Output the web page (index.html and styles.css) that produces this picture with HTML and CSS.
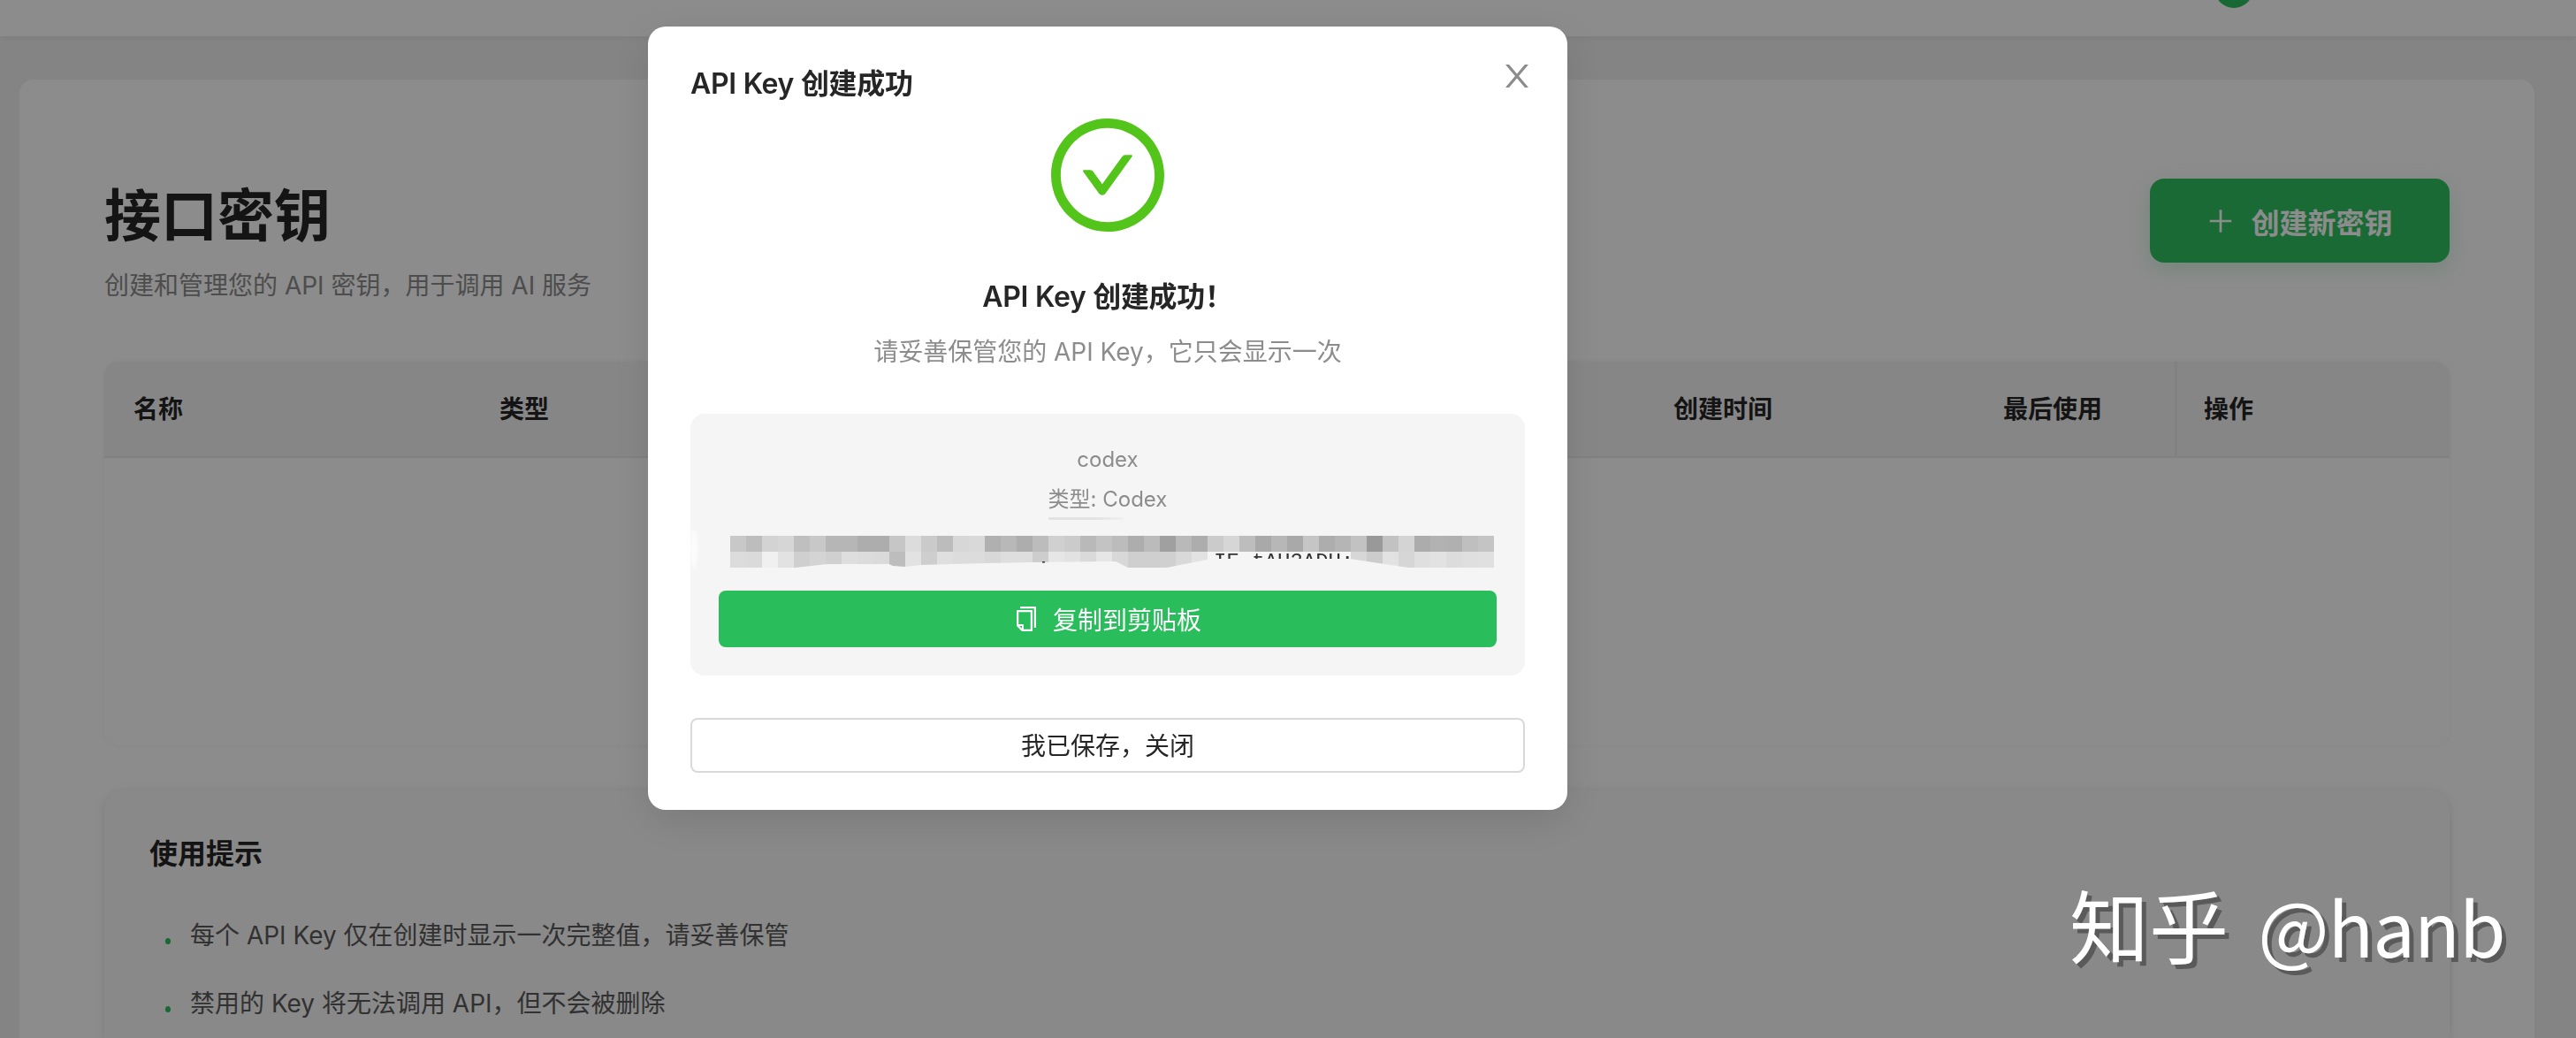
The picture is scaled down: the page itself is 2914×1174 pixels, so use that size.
FILE: index.html
```html
<!DOCTYPE html>
<html>
	<head>
		<title>接口密钥</title>
		<link rel="stylesheet" href="styles.css">
	</head>
	<body>
		<header class="top-bar">
			<div class="avatar"></div>
		</header>
		<main class="page">
			<section class="card">
				<div class="card-head">
					<div>
						<h1 class="page-title">接口密钥</h1>
						<p class="page-sub">创建和管理您的 API 密钥&#xFF0C;用于调用 AI 服务</p>
					</div>
					<button class="create-btn" type="button">
						<svg class="plus-icon" viewBox="64 64 896 896"><path d="M482 152h60q8 0 8 8v704q0 8-8 8h-60q-8 0-8-8V160q0-8 8-8z"/><path d="M176 474h672q8 0 8 8v60q0 8-8 8H176q-8 0-8-8v-60q0-8 8-8z"/></svg>
						<span>创建新密钥</span>
					</button>
				</div>
				<div class="key-table">
					<div class="table-head">
						<div class="cell">名称</div>
						<div class="cell">类型</div>
						<div class="cell">创建时间</div>
						<div class="cell">最后使用</div>
						<div class="cell cell-fixed">操作</div>
					</div>
				</div>
				<div class="tips">
					<h2 class="tips-title">使用提示</h2>
					<ul class="tips-list">
						<li><i class="dot"></i>每个 API Key 仅在创建时显示一次完整值&#xFF0C;请妥善保管</li>
						<li><i class="dot"></i>禁用的 Key 将无法调用 API&#xFF0C;但不会被删除</li>
					</ul>
				</div>
			</section>
		</main>

		<div class="overlay">
			<div class="modal">
				<svg class="close-icon" viewBox="64 64 896 896"><path d="M563.8 512l262.5-312.9c4.4-5.2.7-13.1-6.1-13.1h-79.8c-4.7 0-9.2 2.1-12.3 5.7L511.6 449.8 295.1 191.7c-3-3.6-7.5-5.7-12.3-5.7H203c-6.8 0-10.5 7.9-6.1 13.1L459.4 512 196.9 824.9A7.95 7.95 0 0 0 203 838h79.8c4.7 0 9.2-2.1 12.3-5.7l216.5-258.1 216.5 258.1c3 3.6 7.5 5.7 12.3 5.7h79.8c6.8 0 10.5-7.9 6.1-13.1L563.8 512z"/></svg>
				<div class="modal-title">API Key 创建成功</div>
				<svg class="ok-icon" viewBox="64 64 896 896"><path d="M699 353h-46.9c-10.2 0-19.9 4.9-25.9 13.3L469 584.3l-71.2-98.8c-6-8.3-15.6-13.3-25.9-13.3H325c-6.5 0-10.3 7.4-6.5 12.7l124.6 172.8a31.8 31.8 0 0 0 51.7 0l210.6-292c3.9-5.3.1-12.7-6.4-12.7z"/><path d="M512 64C264.6 64 64 264.6 64 512s200.6 448 448 448 448-200.6 448-448S759.4 64 512 64zm0 820c-205.4 0-372-166.6-372-372s166.6-372 372-372 372 166.6 372 372-166.6 372-372 372z"/></svg>
				<div class="ok-title">API Key 创建成功&#xFF01;</div>
				<div class="ok-sub">请妥善保管您的 API Key&#xFF0C;它只会显示一次</div>
				<div class="key-panel">
					<div class="key-line">codex</div>
					<div class="key-line key-type">类型: Codex</div>
					<div class="type-smear"></div>
					<svg class="key-mosaic" viewBox="0 0 864 44" width="864" height="44">
						<text class="key-text" x="547" y="36">IE tAU3ADU:E</text>
						<g>
							<rect x="0" y="0" width="18" height="18" fill="#c8c8c8"/><rect x="18" y="0" width="18" height="18" fill="#bdbdbd"/><rect x="36" y="0" width="18" height="18" fill="#d3d3d3"/><rect x="54" y="0" width="18" height="18" fill="#d6d6d6"/><rect x="72" y="0" width="18" height="18" fill="#bfbfbf"/><rect x="90" y="0" width="18" height="18" fill="#c8c8c8"/><rect x="108" y="0" width="18" height="18" fill="#b6b6b6"/><rect x="126" y="0" width="18" height="18" fill="#b6b6b6"/>
							<rect x="144" y="0" width="18" height="18" fill="#adadad"/><rect x="162" y="0" width="18" height="18" fill="#adadad"/><rect x="180" y="0" width="18" height="18" fill="#c6c6c6"/><rect x="198" y="0" width="18" height="18" fill="#dcdcdc"/><rect x="216" y="0" width="18" height="18" fill="#cacaca"/><rect x="234" y="0" width="18" height="18" fill="#bcbcbc"/><rect x="252" y="0" width="18" height="18" fill="#d7d7d7"/><rect x="270" y="0" width="18" height="18" fill="#d9d9d9"/>
							<rect x="288" y="0" width="18" height="18" fill="#b0b0b0"/><rect x="306" y="0" width="18" height="18" fill="#b8b8b8"/><rect x="324" y="0" width="18" height="18" fill="#adadad"/><rect x="342" y="0" width="18" height="18" fill="#bcbcbc"/><rect x="360" y="0" width="18" height="18" fill="#d0d0d0"/><rect x="378" y="0" width="18" height="18" fill="#cbcbcb"/><rect x="396" y="0" width="18" height="18" fill="#b9b9b9"/><rect x="414" y="0" width="18" height="18" fill="#c3c3c3"/>
							<rect x="432" y="0" width="18" height="18" fill="#bcbcbc"/><rect x="450" y="0" width="18" height="18" fill="#adadad"/><rect x="468" y="0" width="18" height="18" fill="#bbbbbb"/><rect x="486" y="0" width="18" height="18" fill="#a0a0a0"/><rect x="504" y="0" width="18" height="18" fill="#b9b9b9"/><rect x="522" y="0" width="18" height="18" fill="#adadad"/><rect x="540" y="0" width="18" height="18" fill="#cbcbcb"/><rect x="558" y="0" width="18" height="18" fill="#d6d6d6"/>
							<rect x="576" y="0" width="18" height="18" fill="#bdbdbd"/><rect x="594" y="0" width="18" height="18" fill="#a9a9a9"/><rect x="612" y="0" width="18" height="18" fill="#b7b7b7"/><rect x="630" y="0" width="18" height="18" fill="#a9a9a9"/><rect x="648" y="0" width="18" height="18" fill="#c5c5c5"/><rect x="666" y="0" width="18" height="18" fill="#adadad"/><rect x="684" y="0" width="18" height="18" fill="#b5b5b5"/><rect x="702" y="0" width="18" height="18" fill="#c2c2c2"/>
							<rect x="720" y="0" width="18" height="18" fill="#999999"/><rect x="738" y="0" width="18" height="18" fill="#c2c2c2"/><rect x="756" y="0" width="18" height="18" fill="#d4d4d4"/><rect x="774" y="0" width="18" height="18" fill="#acacac"/><rect x="792" y="0" width="18" height="18" fill="#b2b2b2"/><rect x="810" y="0" width="18" height="18" fill="#b0b0b0"/><rect x="828" y="0" width="18" height="18" fill="#bfbfbf"/><rect x="846" y="0" width="18" height="18" fill="#c4c4c4"/>
						</g>
						<g>
							<rect x="0" y="18" width="18" height="18" fill="#dcdcdc"/><rect x="18" y="18" width="18" height="18" fill="#dadada"/><rect x="36" y="18" width="18" height="18" fill="#f0f0f0"/><rect x="54" y="18" width="18" height="18" fill="#e2e2e2"/><rect x="72" y="18" width="18" height="18" fill="#cfcfcf"/><rect x="90" y="18" width="18" height="18" fill="#d4d4d4"/><rect x="108" y="18" width="18" height="18" fill="#d0d0d0"/><rect x="126" y="18" width="18" height="18" fill="#dedede"/>
							<rect x="144" y="18" width="18" height="18" fill="#dcdcdc"/><rect x="162" y="18" width="18" height="18" fill="#dadada"/><rect x="180" y="18" width="18" height="18" fill="#bdbdbd"/><rect x="198" y="18" width="18" height="18" fill="#e2e2e2"/><rect x="216" y="18" width="18" height="18" fill="#cecece"/><rect x="234" y="18" width="18" height="18" fill="#dfdfdf"/><rect x="252" y="18" width="18" height="18" fill="#dcdcdc"/><rect x="270" y="18" width="18" height="18" fill="#dcdcdc"/>
							<rect x="288" y="18" width="18" height="18" fill="#d8d8d8"/><rect x="306" y="18" width="18" height="18" fill="#dedede"/><rect x="324" y="18" width="18" height="18" fill="#dedede"/><rect x="342" y="18" width="18" height="18" fill="#cdcdcd"/><rect x="360" y="18" width="18" height="18" fill="#e6e6e6"/><rect x="378" y="18" width="18" height="18" fill="#e2e2e2"/><rect x="396" y="18" width="18" height="18" fill="#dadada"/><rect x="414" y="18" width="18" height="18" fill="#e6e6e6"/>
							<rect x="432" y="18" width="18" height="18" fill="#d8d8d8"/><rect x="450" y="18" width="18" height="18" fill="#cfcfcf"/><rect x="468" y="18" width="18" height="18" fill="#cfcfcf"/><rect x="486" y="18" width="18" height="18" fill="#d0d0d0"/><rect x="504" y="18" width="18" height="18" fill="#d9d9d9"/><rect x="522" y="18" width="18" height="18" fill="#e2e2e2"/>
							<rect x="702" y="18" width="18" height="18" fill="#d7d7d7"/><rect x="720" y="18" width="18" height="18" fill="#cccccc"/><rect x="738" y="18" width="18" height="18" fill="#e2e2e2"/><rect x="756" y="18" width="18" height="18" fill="#d6d6d6"/><rect x="774" y="18" width="18" height="18" fill="#dfdfdf"/><rect x="792" y="18" width="18" height="18" fill="#e2e2e2"/><rect x="810" y="18" width="18" height="18" fill="#dcdcdc"/><rect x="828" y="18" width="18" height="18" fill="#dfdfdf"/><rect x="846" y="18" width="18" height="18" fill="#e0e0e0"/>
						</g>
						<polygon fill="#f5f5f5" points="0,44 0,36 74,36 110,32 180,32 184,34 198,35 216,33 250,32 290,31 340,30 424,29 436,29 450,36 494,36 544,26 701,26 767,36 864,36 864,44"/>
						<rect x="353" y="29" width="3" height="1.5" fill="#333"/>
					</svg>
					<button class="copy-btn" type="button">
						<svg class="copy-icon" viewBox="64 64 896 896"><path d="M832 64H296c-4.4 0-8 3.6-8 8v56c0 4.4 3.6 8 8 8h496v688c0 4.4 3.6 8 8 8h56c4.4 0 8-3.6 8-8V96c0-17.7-14.3-32-32-32zM704 192H192c-17.7 0-32 14.3-32 32v530.7c0 8.5 3.4 16.6 9.4 22.6l173.3 173.3c2.2 2.2 4.7 4 7.4 5.5v1.9h4.2c3.5 1.3 7.2 2 11 2H704c17.7 0 32-14.3 32-32V224c0-17.7-14.3-32-32-32zM350 856.2L263.9 770H350v86.2zM664 888H414V746c0-22.1-17.9-40-40-40H232V264h432v624z"/></svg>
						<span>复制到剪贴板</span>
					</button>
				</div>
				<button class="done-btn" type="button">我已保存&#xFF0C;关闭</button>
			</div>
		</div>

		<div class="watermark">知乎 <span class="wm-name">@hanb</span></div>
	</body>
</html>
```

FILE: styles.css
```css
* {
	box-sizing: border-box;
}
html, body {
	height: 100%;
	overflow: hidden;
}
body {
	margin: 0;
	background: #f1f1f1;
	color: #262626;
	font-family: Inter, "Noto Sans CJK SC", sans-serif;
}
button {
	font-family: inherit;
	cursor: pointer;
}

/* page behind the dialog */
.top-bar {
	height: 41px;
	padding: 0 365px 32px 0;
	display: flex;
	justify-content: flex-end;
	align-items: flex-end;
	background: #fff;
	box-shadow: 0 2px 8px rgba(0, 0, 0, 0.06);
}
.avatar {
	flex: none;
	width: 44px;
	height: 44px;
	border-radius: 50%;
	background: #2abd5c;
}
.page {
	width: 2867px;
	height: 1133px;
	padding: 49px 0 0 22px;
	overflow: hidden;
}
.card {
	height: 1084px;
	padding: 112px 96px 0;
	background: #fff;
	border-radius: 16px 16px 0 0;
}
.card-head {
	display: flex;
	justify-content: space-between;
	align-items: flex-start;
}
.page-title {
	margin: 0;
	font-size: 64px;
	line-height: 84px;
	font-weight: 700;
}
.page-sub {
	margin: 17px 0 0;
	font-size: 28px;
	line-height: 40px;
	color: #8c8c8c;
}
.create-btn {
	width: 339px;
	height: 95px;
	display: flex;
	justify-content: center;
	align-items: center;
	gap: 18px;
	border: 0;
	border-radius: 16px;
	background: #2fc260;
	color: #fff;
	font-size: 32px;
	font-weight: 600;
	box-shadow: 0 8px 24px rgba(42, 189, 92, 0.2);
}
.plus-icon {
	width: 32px;
	height: 32px;
	fill: #fff;
}
.key-table {
	height: 434px;
	margin-top: 66px;
	border-radius: 16px;
	box-shadow: 0 0 4px rgba(0, 0, 0, 0.05);
	overflow: hidden;
}
.table-head {
	height: 109px;
	display: grid;
	grid-template-columns: 414px 1328px 373px 227px 311px;
	background: #f5f5f5;
	border-bottom: 2px solid #ebebeb;
	font-size: 28px;
	font-weight: 600;
}
.cell {
	padding-left: 33px;
	line-height: 109px;
}
.cell-fixed {
	border-left: 3px solid #ebebeb;
	padding-left: 30px;
}
.tips {
	height: 281px;
	margin-top: 51px;
	padding: 50px 51px 0;
	background: #fafafa;
	border-radius: 24px 24px 0 0;
	box-shadow: 0 2px 12px rgba(0, 0, 0, 0.12);
}
.tips-title {
	margin: 0;
	font-size: 32px;
	line-height: 44px;
	font-weight: 600;
}
.tips-list {
	margin: 48px 0 0;
	padding: 0;
	list-style: none;
}
.tips-list li {
	display: flex;
	align-items: center;
	margin-bottom: 33px;
	font-size: 28px;
	line-height: 44px;
	color: #595959;
}
.dot {
	flex: none;
	width: 6px;
	height: 7px;
	margin: 12px 22px 0 18px;
	border-radius: 50%;
	background: #2abd5c;
}

/* dialog */
.overlay {
	position: fixed;
	top: 0;
	left: 0;
	width: 100%;
	height: 100%;
	padding: 30px 0 0 733px;
	background: rgba(0, 0, 0, 0.45);
}
.modal {
	position: relative;
	width: 1040px;
	height: 886px;
	padding: 43px 48px 41px;
	background: #fff;
	border-radius: 20px;
	box-shadow: 0 12px 48px rgba(0, 0, 0, 0.12);
}
.close-icon {
	position: absolute;
	top: 38px;
	right: 39px;
	width: 36px;
	height: 36px;
	fill: #8c8c8c;
}
.modal-title {
	font-size: 32px;
	line-height: 44px;
	font-weight: 600;
	letter-spacing: -0.3px;
}
.ok-icon {
	display: block;
	width: 128px;
	height: 128px;
	margin: 17px auto 0;
	fill: #52c41a;
}
.ok-title {
	margin-top: 52px;
	text-align: center;
	font-size: 32px;
	line-height: 44px;
	font-weight: 600;
	letter-spacing: -0.3px;
}
.ok-sub {
	margin-top: 20px;
	text-align: center;
	font-size: 28px;
	line-height: 40px;
	color: #8c8c8c;
}
.key-panel {
	position: relative;
	height: 296px;
	margin-top: 50px;
	padding: 32px;
	background: #f5f5f5;
	border-radius: 16px;
}
.key-panel::before {
	content: "";
	position: absolute;
	top: 130px;
	left: 0;
	width: 8px;
	height: 46px;
	border-radius: 50%;
	background: #fcfcfc;
	filter: blur(2px);
}
.key-line {
	text-align: center;
	font-size: 24px;
	line-height: 40px;
	color: #8c8c8c;
}
.key-type {
	margin-top: 5px;
}
.type-smear {
	width: 85px;
	height: 3px;
	margin: 0 0 0 373px;
	background: linear-gradient(to right, #e2e2e2 60%, #f0f0f0);
}
.key-mosaic {
	display: block;
	margin: 18px 0 -8px 13px;
}
.key-text {
	font-family: "Liberation Mono", monospace;
	font-size: 24px;
	fill: #333;
}
.copy-btn {
	width: 880px;
	height: 64px;
	margin-top: 26px;
	display: flex;
	justify-content: center;
	align-items: center;
	gap: 16px;
	border: 0;
	border-radius: 8px;
	background: #2abd5c;
	color: #fff;
	font-size: 28px;
}
.copy-icon {
	width: 28px;
	height: 28px;
	fill: #fff;
}
.done-btn {
	display: block;
	width: 100%;
	height: 62px;
	margin-top: 48px;
	padding: 0 0 2px;
	border: 2px solid #d9d9d9;
	border-radius: 8px;
	background: #fff;
	color: #262626;
	font-size: 28px;
}

/* site watermark on top of everything */
.watermark {
	position: absolute;
	top: 979px;
	left: 2341px;
	color: #fff;
	font-family: "Noto Sans CJK SC", sans-serif;
	font-size: 90px;
	line-height: 130px;
	white-space: nowrap;
	word-spacing: 13px;
	text-shadow: 5px 5px 0 #5a5a5a;
}
.wm-name {
	font-size: 85px;
	letter-spacing: -1px;
}
```
